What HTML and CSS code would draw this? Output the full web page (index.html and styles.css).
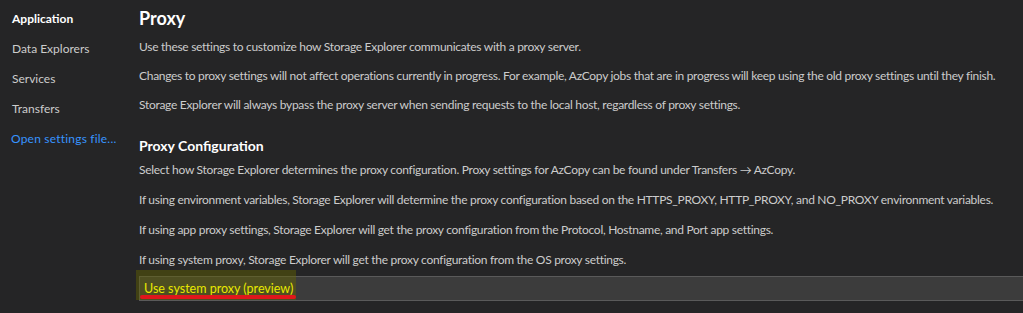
FILE: index.html
```html
<!DOCTYPE html>
<html>
<head>
<meta charset="utf-8">
<link rel="stylesheet" href="styles.css">
</head>
<body>
<div class="layout">
  <nav class="sidebar">
    <div class="nav-item active">Application</div>
    <div class="nav-item">Data Explorers</div>
    <div class="nav-item">Services</div>
    <div class="nav-item">Transfers</div>
    <div class="nav-item link">Open settings file...</div>
  </nav>
  <main class="main">
    <h1 class="title">Proxy</h1>
    <p class="para">Use these settings to customize how Storage Explorer communicates with a proxy server.</p>
    <p class="para">Changes to proxy settings will not affect operations currently in progress. For example, AzCopy jobs that are in progress will keep using the old proxy settings until they finish.</p>
    <p class="para">Storage Explorer will always bypass the proxy server when sending requests to the local host, regardless of proxy settings.</p>
    <h2 class="subtitle">Proxy Configuration</h2>
    <div class="section">
      <p class="para">Select how Storage Explorer determines the proxy configuration. Proxy settings for AzCopy can be found under Transfers → AzCopy.</p>
      <p class="para">If using environment variables, Storage Explorer will determine the proxy configuration based on the HTTPS_PROXY, HTTP_PROXY, and NO_PROXY environment variables.</p>
      <p class="para">If using app proxy settings, Storage Explorer will get the proxy configuration from the Protocol, Hostname, and Port app settings.</p>
      <p class="para">If using system proxy, Storage Explorer will get the proxy configuration from the OS proxy settings.</p>
    </div>
    <div class="select-wrap">
      <div class="select"><span class="select-text">Use system proxy (preview)</span></div>
      <div class="highlight"><span class="redline"></span></div>
    </div>
  </main>
</div>
</body>
</html>
```
FILE: styles.css
```css
html, body {
  margin: 0;
  padding: 0;
  background: #252526;
  height: 100%;
  overflow: hidden;
}
body {
  font-family: "Lato", "Noto Sans", sans-serif;
  font-size: 12px;
  color: #cccccc;
}
.layout {
  display: flex;
}
.sidebar {
  width: 139px;
  flex: none;
  padding: 4px 0 0 12px;
  box-sizing: border-box;
}
.nav-item {
  line-height: 30px;
  font-size: 12px;
  color: #cccccc;
  white-space: nowrap;
}
.nav-item.active {
  font-weight: 700;
  color: #ffffff;
}
.nav-item.link {
  color: #3794ff;
  margin-left: -1px;
  letter-spacing: 0.2px;
}
.main {
  flex: 1;
  min-width: 0;
}
.title {
  margin: 6px 0 0;
  font-size: 18px;
  line-height: 24px;
  font-weight: 700;
  color: #ffffff;
}
.subtitle {
  margin: 24px 0 0;
  font-size: 14px;
  line-height: 18px;
  font-weight: 700;
  color: #ffffff;
}
.para {
  margin: 0;
  margin-top: 12px;
  line-height: 17px;
  white-space: nowrap;
  letter-spacing: -0.29px;
}
.title + .para {
  margin-top: 8px;
}
.section .para {
  margin-top: 13px;
}
.section .para:first-child {
  margin-top: 6px;
}
.select-wrap {
  position: relative;
  margin-top: 8px;
}
.select {
  height: 25px;
  box-sizing: border-box;
  background: #3c3c3c;
  border-top: 1px solid #5a5a5a;
  border-bottom: 1px solid #5a5a5a;
  border-left: 1px solid #5a5a5a;
  display: flex;
  align-items: center;
  padding-left: 4px;
}
.select-text {
  position: relative;
  z-index: 2;
  color: #e8e800;
  font-size: 12.5px;
}
.highlight {
  position: absolute;
  z-index: 1;
  left: -3px;
  top: -6px;
  width: 160px;
  height: 30px;
  background: rgba(100, 100, 0, 0.45);
}
.redline {
  position: absolute;
  left: 4px;
  right: 0;
  bottom: 1px;
  height: 4px;
  border-radius: 2px;
  background: #e0161b;
}
```
